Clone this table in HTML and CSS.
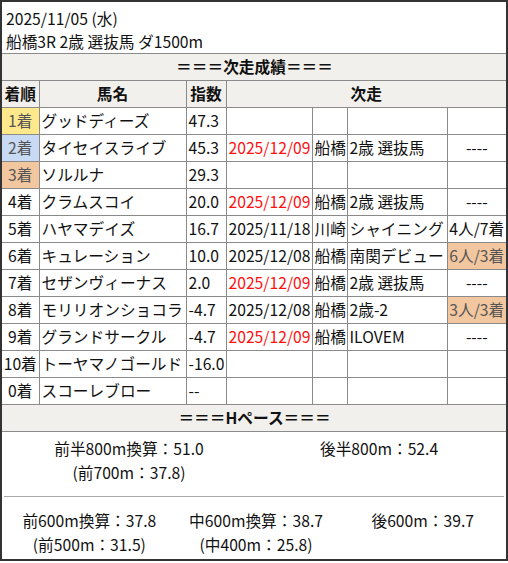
FILE: index.html
```html
<!DOCTYPE html>
<html lang="ja">
<head>
<meta charset="utf-8">
<link rel="stylesheet" href="styles.css">
</head>
<body>
<div class="card">
  <div class="head">
    <div>2025/11/05 (水)</div>
    <div>船橋3R 2歳 選抜馬 ダ1500m</div>
  </div>
  <table class="res">
    <colgroup>
      <col class="c1"><col class="c2"><col class="c3"><col class="c4"><col class="c5"><col class="c6"><col class="c7">
    </colgroup>
    <tr class="band"><td colspan="7">＝＝＝次走成績＝＝＝</td></tr>
    <tr class="band">
      <td class="ctr">着順</td><td class="ctr">馬名</td><td class="ctr">指数</td><td colspan="4" class="ctr">次走</td>
    </tr>
    <tr><td class="ctr p1">1着</td><td>グッドディーズ</td><td>47.3</td><td></td><td></td><td></td><td></td></tr>
    <tr><td class="ctr p2">2着</td><td>タイセイスライブ</td><td>45.3</td><td class="red">2025/12/09</td><td>船橋</td><td>2歳 選抜馬</td><td class="ctr">----</td></tr>
    <tr><td class="ctr p3">3着</td><td>ソルルナ</td><td>29.3</td><td></td><td></td><td></td><td></td></tr>
    <tr><td class="ctr">4着</td><td>クラムスコイ</td><td>20.0</td><td class="red">2025/12/09</td><td>船橋</td><td>2歳 選抜馬</td><td class="ctr">----</td></tr>
    <tr><td class="ctr">5着</td><td>ハヤマデイズ</td><td>16.7</td><td>2025/11/18</td><td>川崎</td><td>シャイニング</td><td class="ctr">4人/7着</td></tr>
    <tr><td class="ctr">6着</td><td>キュレーション</td><td>10.0</td><td>2025/12/08</td><td>船橋</td><td>南関デビュー</td><td class="ctr p3">6人/3着</td></tr>
    <tr><td class="ctr">7着</td><td>セザンヴィーナス</td><td>2.0</td><td class="red">2025/12/09</td><td>船橋</td><td>2歳 選抜馬</td><td class="ctr">----</td></tr>
    <tr><td class="ctr">8着</td><td>モリリオンショコラ</td><td>-4.7</td><td>2025/12/08</td><td>船橋</td><td>2歳-2</td><td class="ctr p3">3人/3着</td></tr>
    <tr><td class="ctr">9着</td><td>グランドサークル</td><td>-4.7</td><td class="red">2025/12/09</td><td>船橋</td><td>ILOVEM</td><td class="ctr">----</td></tr>
    <tr><td class="ctr">10着</td><td>トーヤマノゴールド</td><td>-16.0</td><td></td><td></td><td></td><td></td></tr>
    <tr><td class="ctr">0着</td><td>スコーレブロー</td><td>--</td><td></td><td></td><td></td><td></td></tr>
    <tr class="band"><td colspan="7">＝＝＝Hペース＝＝＝</td></tr>
    <tr>
      <td colspan="7" class="pace">
        <div class="pace-top">
          <div class="pc"><div>前半800m換算：51.0</div><div>(前700m：37.8)</div></div>
          <div class="pc"><div>後半800m：52.4</div></div>
        </div>
        <div class="pace-bot">
          <div class="pc"><div>前600m換算：37.8</div><div>(前500m：31.5)</div></div>
          <div class="pc"><div>中600m換算：38.7</div><div>(中400m：25.8)</div></div>
          <div class="pc"><div>後600m：39.7</div></div>
        </div>
      </td>
    </tr>
  </table>
</div>
</body>
</html>
```
FILE: styles.css
```css
html, body {
  margin: 0;
  padding: 0;
  background: #fff;
}
body {
  font-family: "Noto Sans CJK JP", "Noto Sans", sans-serif;
  font-size: 15.7px;
  color: #111;
}
.card {
  width: 504px;
  height: 557px;
  border: 2px solid #333;
  overflow: hidden;
}
.head {
  padding: 5px 0 0 4px;
  line-height: 23px;
  height: 46px;
}
.res {
  width: 504px;
  border-collapse: collapse;
  table-layout: fixed;
}
.c1 { width: 37px; }
.c2 { width: 147px; }
.c3 { width: 40px; }
.c4 { width: 86px; }
.c5 { width: 35px; }
.c6 { width: 100px; }
.c7 { width: 59px; }
.res td {
  border: 1px solid #8a8a8a;
  padding: 0 1px 0 2px;
  height: 26px;
  line-height: 26px;
  white-space: nowrap;
  overflow: hidden;
}
.res tr td:first-child { border-left: none; }
.res tr td:last-child { border-right: none; }
.band td {
  background: #f2f0ec;
  font-weight: bold;
  text-align: center;
}
.ctr { text-align: center; }
.res td.ctr { padding: 0; }
.p1 { background: #ffe98c; color: #555; }
.p2 { background: #c8daf4; color: #555; }
.p3 { background: #f2c79f; color: #555; }
.red { color: #ff1010; }
.res td.pace {
  padding: 0;
  height: auto;
  line-height: 24px;
  border-bottom: none;
}
.pace-top {
  display: grid;
  grid-template-columns: 1fr 1fr;
  padding: 5px 0 11px;
  margin: 0 2px;
  border-bottom: 1px solid #aaa;
}
.pace-bot {
  display: grid;
  grid-template-columns: 1fr 1fr 1fr;
  padding: 12px 0 4px 4px;
}
.pc {
  text-align: center;
}
```
